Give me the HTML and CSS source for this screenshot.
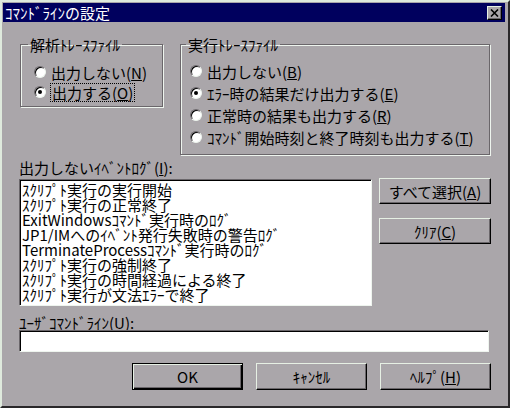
FILE: index.html
```html
<!DOCTYPE html>
<html lang="ja">
<head>
    <meta charset="UTF-8">
    <title>ｺﾏﾝﾄﾞﾗｲﾝの設定</title>
    <link rel="stylesheet" href="styles.css">
</head>
<body>

    <div class="window">
        <div class="titlebar">
            <span class="title">ｺﾏﾝﾄﾞﾗｲﾝの設定</span>
            <span class="close-btn">
                <svg width="9" height="8" viewBox="0 0 9 8">
                    <path d="M1 0.5 L8 7.5 M8 0.5 L1 7.5" stroke="#000" stroke-width="1.6"/>
                </svg>
            </span>
        </div>

        <div class="dialog">
            <div class="groups">
                <fieldset class="group group-parse">
                    <legend>解析ﾄﾚｰｽﾌｧｲﾙ</legend>
                    <div class="radio-row"><span class="radio"></span><span>出力しない(<u>N</u>)</span></div>
                    <div class="radio-row"><span class="radio checked"></span><span class="focused">出力する(<u>O</u>)</span></div>
                </fieldset>

                <fieldset class="group group-run">
                    <legend>実行ﾄﾚｰｽﾌｧｲﾙ</legend>
                    <div class="radio-row"><span class="radio"></span><span>出力しない(<u>B</u>)</span></div>
                    <div class="radio-row"><span class="radio checked"></span><span>ｴﾗｰ時の結果だけ出力する(<u>E</u>)</span></div>
                    <div class="radio-row"><span class="radio"></span><span>正常時の結果も出力する(<u>R</u>)</span></div>
                    <div class="radio-row"><span class="radio"></span><span>ｺﾏﾝﾄﾞ開始時刻と終了時刻も出力する(<u>T</u>)</span></div>
                </fieldset>
            </div>

            <div class="field-label label-events">出力しないｲﾍﾞﾝﾄﾛｸﾞ(<u>I</u>):</div>
            <div class="list-row">
                <div class="listbox">
                    <div class="item">ｽｸﾘﾌﾟﾄ実行の実行開始</div>
                    <div class="item">ｽｸﾘﾌﾟﾄ実行の正常終了</div>
                    <div class="item">ExitWindowsｺﾏﾝﾄﾞ実行時のﾛｸﾞ</div>
                    <div class="item">JP1/IMへのｲﾍﾞﾝﾄ発行失敗時の警告ﾛｸﾞ</div>
                    <div class="item">TerminateProcessｺﾏﾝﾄﾞ実行時のﾛｸﾞ</div>
                    <div class="item">ｽｸﾘﾌﾟﾄ実行の強制終了</div>
                    <div class="item">ｽｸﾘﾌﾟﾄ実行の時間経過による終了</div>
                    <div class="item">ｽｸﾘﾌﾟﾄ実行が文法ｴﾗｰで終了</div>
                </div>
                <div class="side-buttons">
                    <button class="btn">すべて選択(<u>A</u>)</button>
                    <button class="btn">ｸﾘｱ(<u>C</u>)</button>
                </div>
            </div>

            <div class="field-label label-user">ﾕｰｻﾞｺﾏﾝﾄﾞﾗｲﾝ(<u>U</u>):</div>
            <div class="textbox"></div>

            <div class="button-row">
                <button class="btn default">OK</button>
                <button class="btn">ｷｬﾝｾﾙ</button>
                <button class="btn">ﾍﾙﾌﾟ(<u>H</u>)</button>
            </div>
        </div>
    </div>

</body>
</html>
```

FILE: styles.css
```css
* {
    box-sizing: border-box;
}

body {
    margin: 0;
    background: #aaa6aa;
    font-family: "Noto Sans CJK JP", sans-serif;
    font-size: 15px;
    line-height: 15px;
    color: #000;
}

u {
    text-decoration: underline;
    text-underline-offset: 1px;
}

.window {
    width: 510px;
    height: 408px;
    display: flex;
    flex-direction: column;
    background: #aaa6aa;
    border-top: 2px solid #dfeadd;
    border-left: 2px solid #dfeadd;
    border-right: 2px solid #2a282a;
    border-bottom: 2px solid #2a282a;
    padding: 1px 3px 0 1px;
}

.titlebar {
    height: 19px;
    display: flex;
    align-items: center;
    justify-content: space-between;
    padding: 0 3px 0 2px;
    background: #00005e;
    color: #fff;
}

.close-btn {
    width: 15px;
    height: 14px;
    display: flex;
    align-items: center;
    justify-content: center;
    background: #aaa6aa;
    border: 1px solid;
    border-color: #e6f0e4 #000 #000 #e6f0e4;
    box-shadow: inset -1px -1px 0 #6a666a;
}

.dialog {
    flex: 1;
    display: flex;
    flex-direction: column;
    padding: 15px 14px 0 16px;
}

/* group boxes */
.groups {
    display: flex;
    align-items: flex-start;
    gap: 17px;
    padding: 0 1px;
}

.group {
    margin: 0;
    border: 1px solid #6a666a;
    box-shadow: inset 1px 1px 0 #eef4ee, 1px 1px 0 #eef4ee;
}

.group legend {
    padding: 0 2px;
    line-height: 15px;
}

.group-parse {
    width: 143px;
    padding: 10px 0 4px 13px;
}

.group-parse legend {
    margin-left: -6px;
}

.group-parse .radio-row {
    height: 20px;
}

.group-run {
    flex: 1;
    padding: 8px 0 6px 9px;
}

.group-run legend {
    margin-left: -4px;
}

.group-run .radio-row {
    height: 22px;
}

.radio-row {
    display: flex;
    align-items: center;
    white-space: nowrap;
}

.radio {
    width: 12px;
    height: 12px;
    margin-right: 5px;
    flex-shrink: 0;
    display: flex;
    align-items: center;
    justify-content: center;
    border-radius: 50%;
    background: #fff;
    border: 1px solid;
    border-color: #6a666a #eef4ee #eef4ee #6a666a;
    box-shadow: inset 1px 1px 0 #000;
}

.radio.checked::after {
    content: "";
    width: 4px;
    height: 4px;
    border-radius: 50%;
    background: #000;
}

.focused {
    outline: 1px dotted #000;
    padding: 1px 1px;
}

/* event list */
.field-label {
    white-space: nowrap;
}

.label-events {
    margin-top: 5px;
}

.list-row {
    display: flex;
    margin-top: 3px;
}

.listbox {
    width: 353px;
    height: 127px;
    margin-top: 1px;
    padding: 2px 0 0 2px;
    background: #fff;
    border: 1px solid;
    border-color: #6a666a #eef4ee #eef4ee #6a666a;
    box-shadow: inset 1px 1px 0 #000;
    white-space: nowrap;
    overflow: hidden;
}

.item {
    height: 15px;
}

.side-buttons {
    margin-left: 7px;
    display: flex;
    flex-direction: column;
    gap: 14px;
}

.btn {
    width: 111px;
    height: 27px;
    padding: 0;
    font: inherit;
    color: #000;
    background: #aaa6aa;
    border: 1px solid;
    border-color: #e6f0e4 #000 #000 #e6f0e4;
    box-shadow: inset -1px -1px 0 #6a666a;
}

.side-buttons .btn {
    width: 112px;
    height: 26px;
}

.btn.default {
    border-color: #000;
    box-shadow: inset 1px 1px 0 #e6f0e4, inset -1px -1px 0 #000, inset -2px -2px 0 #6a666a;
}

/* user command line */
.label-user {
    margin-top: 9px;
}

.textbox {
    width: 470px;
    height: 22px;
    background: #fff;
    border: 1px solid;
    border-color: #6a666a #eef4ee #eef4ee #6a666a;
    box-shadow: inset 1px 1px 0 #000;
}

.button-row {
    display: flex;
    justify-content: flex-end;
    gap: 13px;
    margin-top: 11px;
}
```
